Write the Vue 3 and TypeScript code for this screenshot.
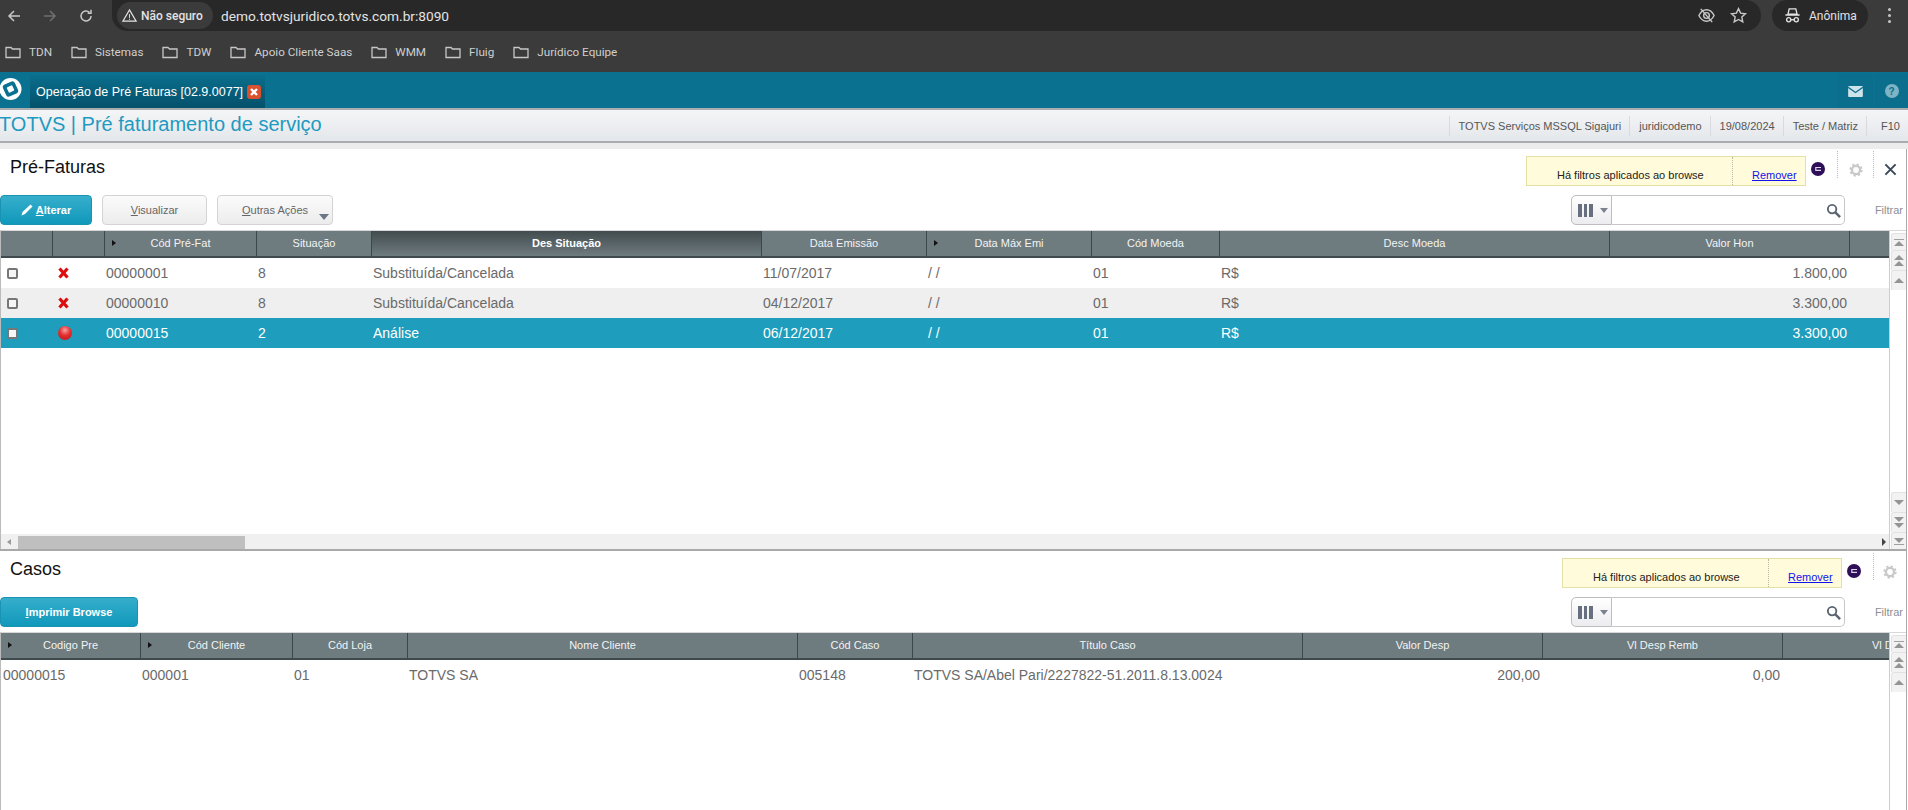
<script setup lang="ts">
const bookmarks: string[] = ['TDN', 'Sistemas', 'TDW', 'Apoio Cliente Saas', 'WMM', 'Fluig', 'Jurídico Equipe']
const statusItems: string[] = ['TOTVS Serviços MSSQL Sigajuri', 'juridicodemo', '19/08/2024', 'Teste / Matriz', 'F10']

interface Head { label: string; arrow?: boolean; active?: boolean }
const headA: Head[] = [
  { label: '' }, { label: '' }, { label: 'Cód Pré-Fat', arrow: true }, { label: 'Situação' },
  { label: 'Des Situação', active: true }, { label: 'Data Emissão' }, { label: 'Data Máx Emi', arrow: true },
  { label: 'Cód Moeda' }, { label: 'Desc Moeda' }, { label: 'Valor Hon' }, { label: '' }
]
interface RowA { icon: 'x' | 'ball'; cod: string; sit: string; des: string; em: string; val: string; cls: string }
const rowsA: RowA[] = [
  { icon: 'x', cod: '00000001', sit: '8', des: 'Substituída/Cancelada', em: '11/07/2017', val: '1.800,00', cls: '' },
  { icon: 'x', cod: '00000010', sit: '8', des: 'Substituída/Cancelada', em: '04/12/2017', val: '3.300,00', cls: 'alt' },
  { icon: 'ball', cod: '00000015', sit: '2', des: 'Análise', em: '06/12/2017', val: '3.300,00', cls: 'sel' }
]
const headB: Head[] = [
  { label: 'Codigo Pre', arrow: true }, { label: 'Cód Cliente', arrow: true }, { label: 'Cód Loja' },
  { label: 'Nome Cliente' }, { label: 'Cód Caso' }, { label: 'Título Caso' }, { label: 'Valor Desp' },
  { label: 'Vl Desp Remb' }, { label: 'Vl D' }
]
const rowB: string[] = ['00000015', '000001', '01', 'TOTVS SA', '005148', 'TOTVS SA/Abel Pari/2227822-51.2011.8.13.0024']
</script>

<template>
  <div class="page">
    <div class="chrome-top">
      <div class="nav">
        <svg class="nav-ico" viewBox="0 0 16 16"><path d="M14 8H3M8 3 3 8l5 5" fill="none" stroke="#c7c7c7" stroke-width="1.5"/></svg>
        <svg class="nav-ico" viewBox="0 0 16 16"><path d="M2 8h11M8 3l5 5-5 5" fill="none" stroke="#6f6f6f" stroke-width="1.5"/></svg>
        <svg class="nav-ico" viewBox="0 0 16 16"><path d="M13 8a5 5 0 1 1-1.600-3.700M13 1.800v3.400H9.600" fill="none" stroke="#c7c7c7" stroke-width="1.500"/></svg>
      </div>
      <div class="omnibox">
        <div class="chip">
          <svg class="warn" viewBox="0 0 16 16"><path d="M8 2 15 14H1Z" fill="none" stroke="#e3e3e3" stroke-width="1.200"/><path d="M8 6.500v4M8 11.400v1.200" stroke="#e3e3e3" stroke-width="1"/></svg>
          <span>Não seguro</span>
        </div>
        <span class="url">demo.totvsjuridico.totvs.com.br:8090</span>
        <div class="omni-right">
          <svg class="omni-ico" viewBox="0 0 20 20"><path d="M2 10c2-4 5-6 8-6s6 2 8 6c-2 4-5 6-8 6s-6-2-8-6Z" fill="none" stroke="#c7c7c7" stroke-width="1.500"/><circle cx="10" cy="10" r="3" fill="none" stroke="#c7c7c7" stroke-width="1.500"/><path d="M4 3l12 14" stroke="#c7c7c7" stroke-width="1.500"/></svg>
          <svg class="omni-ico" viewBox="0 0 20 20"><path d="m10 2.800 2.200 4.700 5.100.6-3.800 3.500 1 5.100-4.500-2.500-4.500 2.500 1-5.100-3.800-3.500 5.100-.6Z" fill="none" stroke="#c7c7c7" stroke-width="1.500"/></svg>
        </div>
      </div>
      <div class="profile">
        <svg class="spy" viewBox="0 0 18 18"><path d="M5.500 2h7l1.300 5.500H4.200ZM1.500 8.500h15" fill="none" stroke="#e3e3e3" stroke-width="1.400"/><circle cx="5" cy="13.500" r="2.200" fill="none" stroke="#e3e3e3" stroke-width="1.400"/><circle cx="13" cy="13.500" r="2.200" fill="none" stroke="#e3e3e3" stroke-width="1.400"/><path d="M7.300 13.500h3.400" stroke="#e3e3e3" stroke-width="1.400"/></svg>
        <span>Anônima</span>
      </div>
      <div class="kebab"><i></i><i></i><i></i></div>
    </div>

    <div class="bookmarks">
      <div v-for="b in bookmarks" :key="b" class="bm">
        <svg class="folder" viewBox="0 0 16 14"><path d="M1 2.500h5l1.500 1.500H15v8.500H1Z" fill="none" stroke="#c7c7c7" stroke-width="1.300"/></svg>
        <span>{{ b }}</span>
      </div>
    </div>

    <div class="appbar">
      <svg class="logo" viewBox="0 0 26 26">
        <circle cx="10.500" cy="13" r="11" fill="#fff"/>
        <rect x="4" y="6.500" width="13" height="13" rx="3" transform="rotate(-25 10.500 13)" fill="#0a7290"/>
        <rect x="7.500" y="10" width="6" height="6" rx="1" transform="rotate(-25 10.500 13)" fill="#fff"/>
      </svg>
      <div class="tab">
        <span>Operação de Pré Faturas [02.9.0077]</span>
        <svg class="tab-x" viewBox="0 0 14 14"><rect width="14" height="14" rx="3" fill="#d9512f"/><path d="M4 4l6 6M10 4l-6 6" stroke="#fff" stroke-width="2.400"/></svg>
      </div>
      <div class="tiles">
        <div class="tile">
          <svg class="tile-ico" viewBox="0 0 16 12"><rect width="16" height="12" rx="1" fill="#cfe3ea"/><path d="M0 1.500 8 7l8-5.500" fill="none" stroke="#0a7290" stroke-width="1.400"/></svg>
        </div>
        <div class="tile help">?</div>
      </div>
    </div>

    <div class="titlebar">
      <span class="app-title">TOTVS | Pré faturamento de serviço</span>
      <div class="status">
        <span v-for="s in statusItems" :key="s" class="st">{{ s }}</span>
      </div>
    </div>
    <div class="subbar"></div>

    <section class="panel first">
      <div class="p-head">
        <h2>Pré-Faturas</h2>
        <div class="notice">
          <span class="n-text">Há filtros aplicados ao browse</span>
          <a class="n-link">Remover</a>
        </div>
        <span class="dot"><svg class="dot-ico" viewBox="0 0 14 14"><circle cx="7" cy="7" r="7" fill="#2e0f58"/><path d="M10 5.500H4.800v2.800H10" fill="none" stroke="#ddd6ea" stroke-width="1.200"/></svg></span>
        <span class="pipe">
          <svg class="gear" viewBox="0 0 16 16"><circle cx="8" cy="8" r="4.600" fill="none" stroke="#c8c8c8" stroke-width="2.600"/><circle cx="8" cy="8" r="6.600" fill="none" stroke="#c8c8c8" stroke-width="2" stroke-dasharray="2.590 2.590"/></svg>
        </span>
        <span class="pipe close">
          <svg class="x-ico" viewBox="0 0 14 14"><path d="M1.500 1.500l11 11M12.500 1.500l-11 11" stroke="#3c4a5a" stroke-width="2.200"/></svg>
        </span>
      </div>
      <div class="p-tools">
        <button class="btn primary w-alt">
          <svg class="pencil" viewBox="0 0 12 12"><path d="M.5 11.500l1-3.500L9.500.5l2 2-7.500 7.500Z" fill="#fff"/></svg>
          <span><u>A</u>lterar</span>
        </button>
        <button class="btn w-vis"><span><u>V</u>isualizar</span></button>
        <button class="btn w-out"><span><u>O</u>utras Ações</span><i class="caret"></i></button>
        <div class="search">
          <div class="col-btn"><b></b><b></b><b></b><i></i></div>
          <div class="s-input">
            <svg class="mag" viewBox="0 0 16 16"><circle cx="6.500" cy="6.500" r="4.500" fill="none" stroke="#5a6470" stroke-width="2"/><path d="M10 10l5 5" stroke="#5a6470" stroke-width="2.600"/></svg>
          </div>
        </div>
        <span class="filtrar">Filtrar</span>
      </div>
      <div class="t-wrap">
        <div class="t-main">
          <div class="grid cols-a thead">
            <div v-for="(h, i) in headA" :key="i" class="th" :class="{ active: h.active }">
              <i v-if="h.arrow" class="harrow"></i>{{ h.label }}
            </div>
          </div>
          <div v-for="r in rowsA" :key="r.cod" class="grid cols-a tr" :class="r.cls">
            <div class="td"><span class="check"></span></div>
            <div class="td status-cell">
              <svg v-if="r.icon === 'x'" class="mark" viewBox="0 0 11 12"><path d="M1.500 1.500l8 9M9.500 1.500l-8 9" stroke="#dc0d0d" stroke-width="3.200"/></svg>
              <span v-else class="ball"></span>
            </div>
            <div class="td">{{ r.cod }}</div>
            <div class="td">{{ r.sit }}</div>
            <div class="td">{{ r.des }}</div>
            <div class="td">{{ r.em }}</div>
            <div class="td">/ /</div>
            <div class="td">01</div>
            <div class="td">R$</div>
            <div class="td right">{{ r.val }}</div>
            <div class="td"></div>
          </div>
          <div class="spacer"></div>
          <div class="hbar">
            <i class="tri-l"></i>
            <div class="thumb"></div>
            <i class="tri-r"></i>
          </div>
        </div>
        <div class="vbar">
          <div class="vb short"><i class="line"></i><i class="up"></i></div>
          <div class="vb"><i class="up"></i><i class="up"></i></div>
          <div class="vb"><i class="up"></i></div>
          <div class="vgap"></div>
          <div class="vb"><i class="down"></i></div>
          <div class="vb"><i class="down"></i><i class="down"></i></div>
          <div class="vb short"><i class="down"></i><i class="line"></i></div>
        </div>
      </div>
    </section>

    <section class="panel second">
      <div class="p-head">
        <h2>Casos</h2>
        <div class="notice">
          <span class="n-text">Há filtros aplicados ao browse</span>
          <a class="n-link">Remover</a>
        </div>
        <span class="dot"><svg class="dot-ico" viewBox="0 0 14 14"><circle cx="7" cy="7" r="7" fill="#2e0f58"/><path d="M10 5.500H4.800v2.800H10" fill="none" stroke="#ddd6ea" stroke-width="1.200"/></svg></span>
        <span class="pipe last">
          <svg class="gear" viewBox="0 0 16 16"><circle cx="8" cy="8" r="4.600" fill="none" stroke="#c8c8c8" stroke-width="2.600"/><circle cx="8" cy="8" r="6.600" fill="none" stroke="#c8c8c8" stroke-width="2" stroke-dasharray="2.590 2.590"/></svg>
        </span>
      </div>
      <div class="p-tools">
        <button class="btn primary w-imp"><span><u>I</u>mprimir Browse</span></button>
        <div class="search">
          <div class="col-btn"><b></b><b></b><b></b><i></i></div>
          <div class="s-input">
            <svg class="mag" viewBox="0 0 16 16"><circle cx="6.500" cy="6.500" r="4.500" fill="none" stroke="#5a6470" stroke-width="2"/><path d="M10 10l5 5" stroke="#5a6470" stroke-width="2.600"/></svg>
          </div>
        </div>
        <span class="filtrar">Filtrar</span>
      </div>
      <div class="t-wrap">
        <div class="t-main">
          <div class="grid cols-b thead">
            <div v-for="(h, i) in headB" :key="i" class="th" :class="{ clip: i === 8 }">
              <i v-if="h.arrow" class="harrow"></i>{{ h.label }}
            </div>
          </div>
          <div class="grid cols-b tr">
            <div v-for="(c, i) in rowB" :key="i" class="td">{{ c }}</div>
            <div class="td right">200,00</div>
            <div class="td right">0,00</div>
            <div class="td"></div>
          </div>
        </div>
        <div class="vbar">
          <div class="vb short"><i class="line"></i><i class="up"></i></div>
          <div class="vb"><i class="up"></i><i class="up"></i></div>
          <div class="vb"><i class="up"></i></div>
        </div>
      </div>
    </section>
  </div>
</template>

<style>
html, body { margin: 0; overflow: hidden; background: #fff; }
</style>

<style scoped>
.page { width: 1908px; height: 810px; overflow: hidden; display: flex; flex-direction: column; font-family: "Liberation Sans", Arial, sans-serif; }

.chrome-top { height: 31px; background: #3b3b3b; display: flex; align-items: center; flex: none; font-family: Roboto, "Liberation Sans", sans-serif; color: #e3e3e3; }
.nav { width: 112px; display: flex; align-items: center; gap: 20px; padding-left: 6px; box-sizing: border-box; flex: none; }
.nav-ico { width: 16px; height: 16px; flex: none; }
.omnibox { width: 1649px; height: 31px; background: #282828; border-radius: 0 16px 16px 16px; display: flex; align-items: center; padding-left: 5px; box-sizing: border-box; flex: none; }
.chip { height: 27px; width: 96px; border-radius: 14px; background: #3b3b3b; display: flex; align-items: center; gap: 4px; padding-left: 5px; box-sizing: border-box; font-size: 12px; font-weight: 500; flex: none; }
.warn { width: 15px; height: 15px; }
.url { margin-left: 8px; font-size: 13.700px; color: #e3e3e3; }
.omni-right { margin-left: auto; display: flex; gap: 13px; padding-right: 13px; align-items: center; }
.omni-ico { width: 19px; height: 19px; }
.profile { margin-left: 11px; width: 96px; height: 31px; background: #282828; border-radius: 16px; display: flex; align-items: center; gap: 8px; padding-left: 12px; box-sizing: border-box; font-size: 12px; flex: none; }
.spy { width: 17px; height: 17px; }
.kebab { margin-left: 20px; display: flex; flex-direction: column; gap: 3px; }
.kebab i { width: 3px; height: 3px; border-radius: 50%; background: #c7c7c7; display: block; }

.bookmarks { height: 41px; background: #3b3b3b; display: flex; align-items: center; gap: 19px; padding-left: 5px; flex: none; font-family: Roboto, "Liberation Sans", sans-serif; font-size: 11.700px; color: #cfcfcf; }
.bm { display: flex; align-items: center; gap: 8px; }
.folder { width: 16px; height: 14px; }

.appbar { height: 36px; background: #0a7290; display: flex; align-items: flex-end; flex: none; }
.logo { width: 26px; height: 26px; align-self: flex-start; margin: 4px 4px 0 0; flex: none; }
.tab { width: 235px; height: 33px; background: linear-gradient(#0a6e8c, #04516b); display: flex; align-items: center; gap: 4px; padding-left: 6px; box-sizing: border-box; color: #fff; font-size: 12.500px; flex: none; white-space: nowrap; }
.tab-x { width: 14px; height: 14px; flex: none; }
.tiles { margin-left: auto; display: flex; gap: 2px; }
.tile { width: 35px; height: 34px; background: #0a6e8c; display: flex; align-items: center; justify-content: center; border-radius: 0 0 2px 2px; }
.tile-ico { width: 15px; height: 11px; }
.help { width: 33px; color: #0a6e8c; font-weight: 700; font-size: 10px; position: relative; z-index: 0; }
.help::before { content: ""; position: absolute; z-index: -1; left: 10px; top: 10px; width: 14px; height: 14px; border-radius: 50%; background: #7fb4c6; }

.titlebar { height: 31px; background: linear-gradient(#f4f5f7, #e4e7eb); border-top: 2px solid #a9adb0; border-bottom: 2px solid #a9adb0; display: flex; align-items: center; flex: none; }
.app-title { font-size: 20px; color: #1f9ac0; margin-left: -1px; position: relative; top: -1px; }
.status { margin-left: auto; display: flex; height: 22px; align-items: center; font-size: 11px; color: #565656; padding-right: 8px; }
.st { height: 20px; line-height: 20px; border-left: 1px solid #d8dadd; padding: 0 8px 0 9px; }
.st:last-child { padding: 0 0 0 14px; }
.subbar { height: 6px; background: #ececec; flex: none; }

.panel { display: flex; flex-direction: column; flex: none; width: 1907px; border-right: 1px solid #a9a9a9; box-sizing: border-box; }
.first { height: 402px; border-bottom: 2px solid #a9a9a9; }
.second { flex: 1; min-height: 0; }
.p-head { height: 37px; display: flex; align-items: flex-start; padding-top: 7px; box-sizing: border-box; flex: none; }
h2 { margin: 0 0 0 10px; font-size: 18px; font-weight: 400; color: #111; line-height: 22px; }
.notice { width: 280px; height: 30px; margin-left: auto; background: #fffbdb; border: 1px solid #e3e0a5; box-sizing: border-box; display: flex; font-size: 11px; color: #222; flex: none; }
.n-text { width: 206px; padding-left: 30px; box-sizing: border-box; border-right: 1px dotted #b8b8a8; line-height: 36px; }
.n-link { color: #1212ee; text-decoration: underline; margin-left: 19px; line-height: 36px; }
.dot { width: 31px; height: 30px; padding-left: 5px; padding-top: 6px; box-sizing: border-box; flex: none; }
.dot-ico { width: 14px; height: 14px; display: block; }
.pipe { width: 36px; height: 27px; margin-top: -5px; border-left: 1px dotted #b3bec3; display: flex; justify-content: center; padding-top: 12px; box-sizing: border-box; flex: none; }
.pipe.last, .close { width: 33px; }
.gear { width: 14px; height: 14px; }
.x-ico { width: 13px; height: 13px; }

.p-tools { height: 44px; display: flex; align-items: flex-start; padding-top: 9px; box-sizing: border-box; flex: none; }
.btn { height: 30px; border: 1px solid #d4d4d4; border-radius: 4px; background: linear-gradient(#fbfbfb, #ececec); font-family: inherit; font-size: 11px; color: #666; position: relative; padding: 0; display: flex; align-items: center; justify-content: center; gap: 3px; flex: none; }
.primary { background: linear-gradient(#36aecb, #1098bb); border: 1px solid #1a93b3; color: #fff; font-weight: 700; }
.w-alt { width: 92px; margin-right: 10px; }
.w-vis { width: 105px; margin-right: 10px; }
.w-out { width: 116px; }
.w-imp { width: 138px; }
.pencil { width: 12px; height: 12px; }
.caret { position: absolute; right: 3px; bottom: 4px; border: 5px solid transparent; border-top: 6px solid #6c7684; border-bottom: 0; }
.search { margin-left: auto; width: 274px; height: 30px; display: flex; flex: none; }
.col-btn { width: 41px; height: 30px; background: linear-gradient(#fff, #ececf0); border: 1px solid #bdbdbd; border-radius: 5px 0 0 5px; box-sizing: border-box; display: flex; align-items: center; gap: 2px; padding-left: 6px; }
.col-btn b { width: 3.500px; height: 13px; background: #68707f; display: block; }
.col-btn i { margin-left: 5px; border: 4px solid transparent; border-top: 5px solid #7a8290; border-bottom: 0; }
.s-input { flex: 1; height: 30px; border: 1px solid #c6c6c6; border-left: 0; border-radius: 0 5px 5px 0; box-sizing: border-box; display: flex; align-items: center; justify-content: flex-end; padding-right: 3px; }
.mag { width: 15px; height: 15px; }
.filtrar { width: 61px; text-align: right; padding-right: 3px; box-sizing: border-box; font-size: 11px; color: #8b8f96; line-height: 30px; flex: none; }

.t-wrap { flex: 1; min-height: 0; display: flex; border-left: 1px solid #bbb; border-top: 1px solid #d8d8d8; }
.t-main { flex: 1; min-width: 0; display: flex; flex-direction: column; overflow: hidden; }
.grid { display: grid; }
.cols-a { grid-template-columns: 52px 52px 152px 115px 390px 165px 165px 128px 390px 240px 39px; }
.cols-b { grid-template-columns: 140px 152px 115px 390px 115px 390px 240px 240px 106px; }
.thead { height: 27px; border-bottom: 2px solid #3f4a4f; box-sizing: border-box; background: #6e7b7f; flex: none; }
.th { position: relative; color: #f2f4f4; font-size: 11px; line-height: 25px; text-align: center; border-right: 1px solid #3c474d; white-space: nowrap; overflow: hidden; }
.th:last-child { border-right: 0; }
.th.clip { text-align: left; padding-left: 89px; }
.th.active { background: linear-gradient(#424c4f, #6e7b7f); font-weight: 700; color: #fff; }
.harrow { position: absolute; left: 7px; top: 9px; border: 3.500px solid transparent; border-left: 4px solid #111; border-right: 0; }
.tr { height: 30px; background: #fff; color: #6a6a6a; font-size: 14px; line-height: 30px; flex: none; }
.alt { background: #efefef; }
.sel { background: #1e9dbd; color: #fff; }
.td { padding-left: 1px; white-space: nowrap; display: flex; align-items: center; }
.td:first-child { padding-left: 2px; }
.right { justify-content: flex-end; padding: 0 3px 0 0; }
.status-cell { padding-left: 5px; }
.check { width: 11px; height: 11px; border: 2px solid #777; border-radius: 2px; background: #f6f6f6; box-sizing: border-box; margin-left: 4px; }
.mark { width: 11px; height: 12px; }
.ball { width: 14px; height: 14px; border-radius: 50%; background: radial-gradient(circle at 50% 30%, #f6a0a0 0%, #e32e2e 45%, #b81818 100%); }
.spacer { flex: 1; }
.hbar { height: 15px; background: #f0f0f0; position: relative; flex: none; }
.thumb { position: absolute; left: 17px; top: 2px; bottom: 0; width: 227px; background: #bfbfbf; }
.tri-l { position: absolute; left: 6px; top: 5px; border: 3px solid transparent; border-right: 4px solid #999; border-left: 0; }
.tri-r { position: absolute; right: 3px; top: 4px; border: 4px solid transparent; border-left: 4px solid #444; border-right: 0; }
.vbar { width: 17px; flex: none; border-left: 1px solid #ccc; box-sizing: border-box; display: flex; flex-direction: column; background: #fff; padding: 2px 0 0 1px; }
.vb { height: 20px; border-top: 1px solid #e2e2e2; border-left: 1px solid #e2e2e2; border-radius: 3px 0 0 0; background: #f2f2f2; display: flex; flex-direction: column; align-items: center; justify-content: center; gap: 1px; box-sizing: border-box; flex: none; }
.short { height: 17px; }
.vgap { flex: 1; }
.line { width: 10px; height: 1px; background: #a0a0a0; display: block; }
.up { border: 5px solid transparent; border-bottom: 5px solid #949494; border-top: 0; display: block; }
.down { border: 5px solid transparent; border-top: 5px solid #949494; border-bottom: 0; display: block; }
</style>
